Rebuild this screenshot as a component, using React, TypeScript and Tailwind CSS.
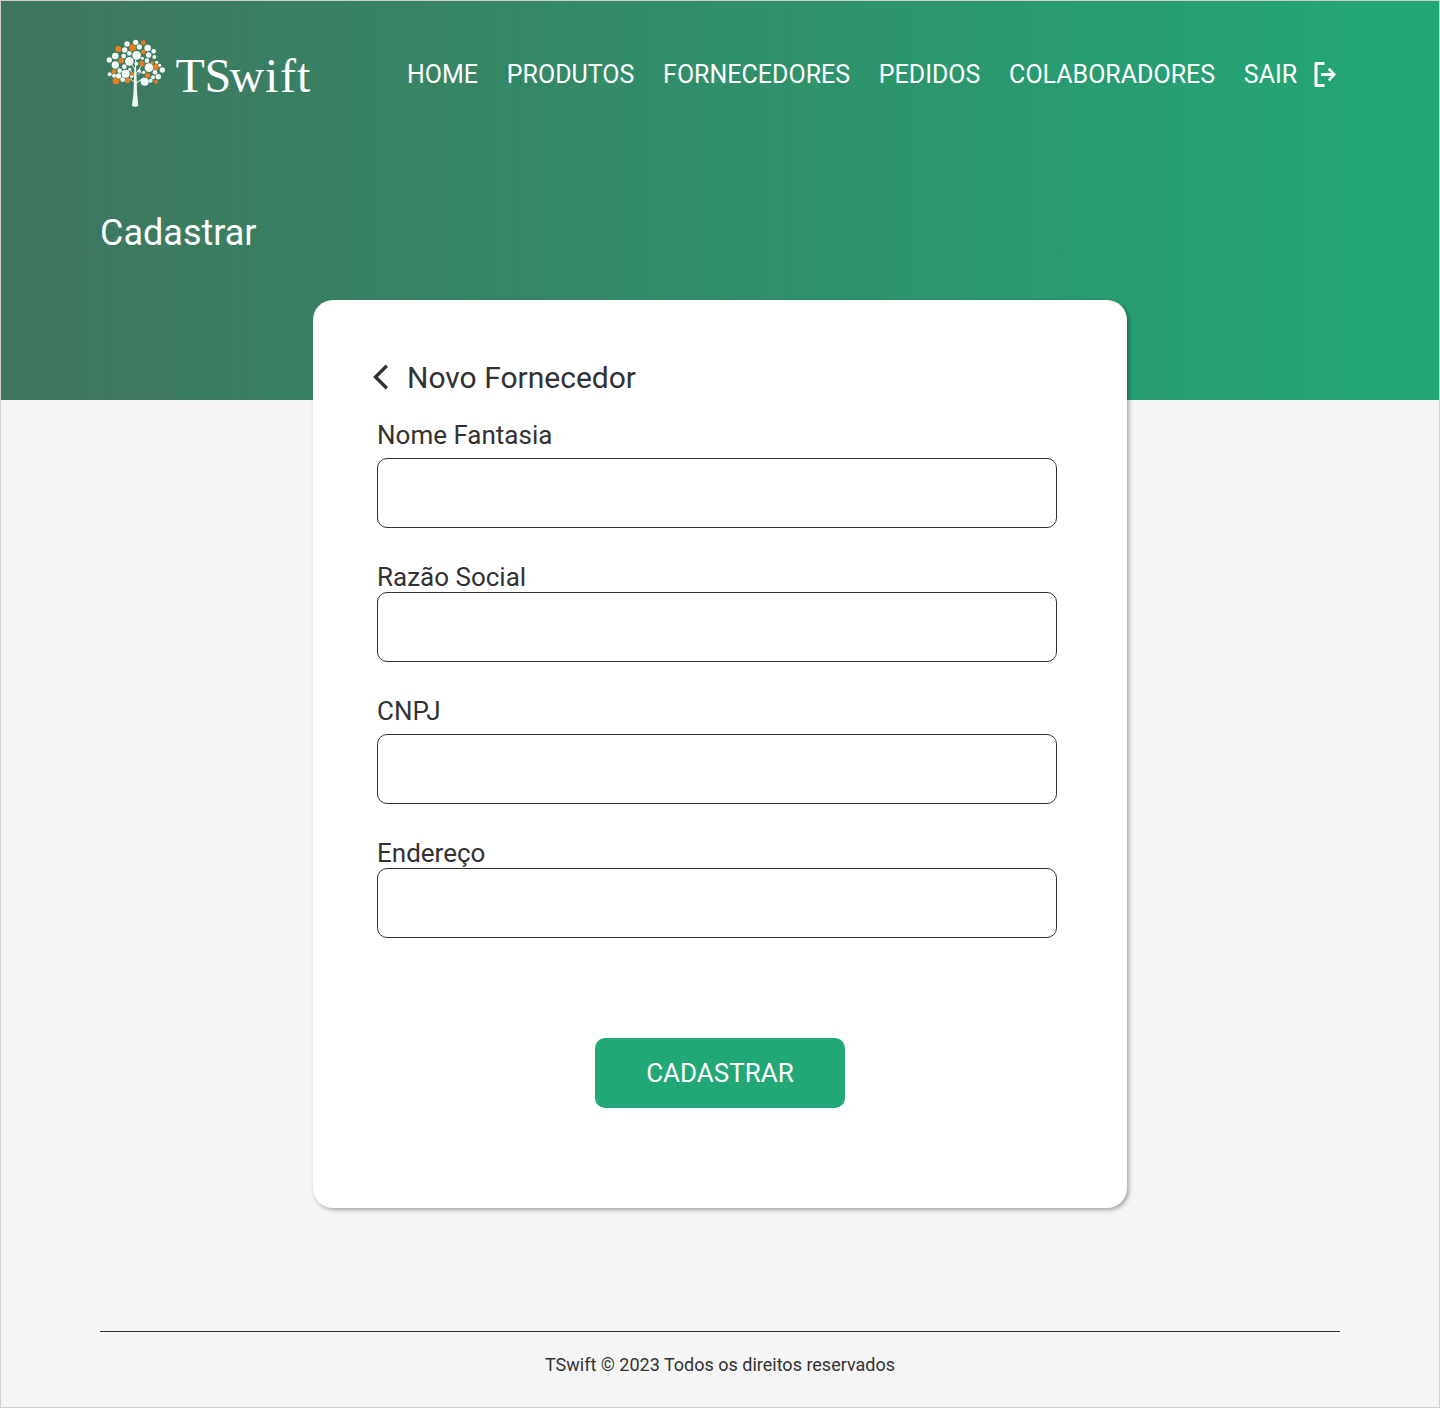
const WHITE_LEAVES: [number, number, number][] = [
  [96, 42, 8], [122, 37, 8], [133, 51, 8], [158, 54, 10], [89, 60, 8], [61, 78, 10], [43, 90, 8],
  [61, 105, 11], [86, 78, 7], [103, 70, 7], [125, 76, 13], [103, 94, 13], [161, 75, 8], [176, 64, 7],
  [178, 81, 6], [156, 92, 7], [162, 113, 13], [194, 106, 5], [202, 120, 8], [185, 97, 5], [180, 127, 7],
  [190, 140, 8], [174, 142, 6], [149, 155, 12], [167, 152, 6], [88, 110, 7], [74, 122, 7], [92, 131, 12],
  [57, 137, 6], [44, 133, 6], [71, 138, 8], [83, 149, 7], [104, 118, 5], [146, 127, 5], [133, 123, 5],
  [110, 139, 5], [142, 85, 5], [124, 101, 6], [112, 52, 4], [58, 152, 4],
];

const ORANGE_LEAVES: [number, number, number][] = [
  [70, 57, 9], [113, 53, 10], [145, 38, 7], [145, 66, 7], [79, 92, 8], [141, 101, 8], [172, 98, 5],
  [182, 111, 9], [57, 125, 7], [63, 153, 10], [98, 151, 8], [112, 132, 6], [158, 136, 8], [183, 155, 6],
];

function Logo() {
  return (
    <div className="flex h-[85px] items-start">
      <svg viewBox="0 0 240 255" className="-ml-[5px] h-[85px] w-20 shrink-0">
        <g stroke="#edf6f1" fill="none" strokeWidth="3">
          <path d="M121 150 L122 86 M121 145 L104 117 M121 134 L141 105 M121 158 L104 145 M122 160 L146 143 M121 120 L108 100" />
          <path d="M128 135 q10 -12 18 -6 M126 160 q8 -12 14 -10" strokeWidth="2" />
        </g>
        <path d="M118 112 L117 145 Q117 190 111 227 Q120 233 130 227 Q125 190 125 145 L123 112 Z" fill="#edf6f1" />
        {WHITE_LEAVES.map(([x, y, r]) => (
          <circle key={`${x}-${y}`} cx={x} cy={y} r={r} fill="#f3faf6" />
        ))}
        {ORANGE_LEAVES.map(([x, y, r]) => (
          <circle key={`${x}-${y}`} cx={x} cy={y} r={r} fill="#ee7d1b" />
        ))}
      </svg>
      <svg viewBox="0 0 150 85" className="h-[85px] w-[150px] shrink-0 overflow-visible">
        <text
          x="0.5 29.5 54.5 90 105 122"
          y="61.5"
          fill="#ffffff"
          fontSize="48"
          className="font-['Liberation_Serif',serif]"
        >
          TSwift
        </text>
      </svg>
    </div>
  );
}

function Field({ label, className, labelClass }: { label: string; className: string; labelClass: string }) {
  return (
    <label className={`block ${className}`}>
      <span className={`block text-[26px] leading-[30px] ${labelClass}`}>{label}</span>
      <input className="block h-[70px] w-[680px] rounded-[10px] border border-[#323232] bg-white px-4 text-2xl outline-none" />
    </label>
  );
}

const LINKS = ["HOME", "PRODUTOS", "FORNECEDORES", "PEDIDOS", "COLABORADORES"];

export default function App() {
  return (
    <div className="h-[1408px] w-[1440px] overflow-hidden border border-[#d0d0d0] bg-[#f5f5f5] font-[Roboto,sans-serif] text-[#323232]">
      <header className="h-[399px] bg-linear-to-r/srgb from-[#3f755e] to-[#22a876] pt-[29px] pl-[99px] text-white">
        <div className="flex">
          <Logo />
          <nav className="ml-[82px] flex gap-[28.7px] pt-[30px] text-[25px] leading-[30px] whitespace-nowrap">
            {LINKS.map((link) => (
              <a key={link} href="#">{link}</a>
            ))}
            <a href="#" className="flex">
              SAIR
              <svg viewBox="0 0 24 28" className="ml-[15px] h-7 w-6" fill="none" stroke="white" strokeWidth="3">
                <path d="M12.5 3.5 H4 V25.5 H12.5" strokeLinejoin="round" />
                <path d="M9 14.5 H22" />
                <path d="M16.8 8.7 L22.2 14.5 L16.8 20.3" strokeWidth="2.6" />
              </svg>
            </a>
          </nav>
        </div>
        <h1 className="mt-[97px] text-4xl leading-[42px]">Cadastrar</h1>
      </header>
      <main className="relative mx-auto -mt-[100px] h-[908px] w-[814px] rounded-[20px] bg-white pl-16 shadow-[2px_2px_4px_rgba(0,0,0,0.33)]">
        <div className="flex pt-[60px]">
          <svg viewBox="0 0 18 28" className="mt-[3px] -ml-[5px] h-7 w-[18px]" fill="none" stroke="#323232" strokeWidth="3.4">
            <path d="M14.8 2.7 L3.5 14 L14.8 25.3" />
          </svg>
          <h2 className="ml-[17px] text-[30px] leading-[35px]">Novo Fornecedor</h2>
        </div>
        <Field label="Nome Fantasia" className="mt-[25px]" labelClass="mb-2" />
        <Field label="Razão Social" className="mt-[34px]" labelClass="mb-0" />
        <Field label="CNPJ" className="mt-[34px]" labelClass="mb-2" />
        <Field label="Endereço" className="mt-[34px]" labelClass="mb-0" />
        <button className="mt-[100px] ml-[218px] block h-[70px] w-[250px] rounded-[10px] bg-[#22a876] text-[26px] text-white">
          CADASTRAR
        </button>
      </main>
      <footer className="mx-auto mt-[123px] w-[1240px] border-t border-[#323232] pt-[22px] text-center text-[18px] leading-[22px]">
        TSwift © 2023 Todos os direitos reservados
      </footer>
    </div>
  );
}
